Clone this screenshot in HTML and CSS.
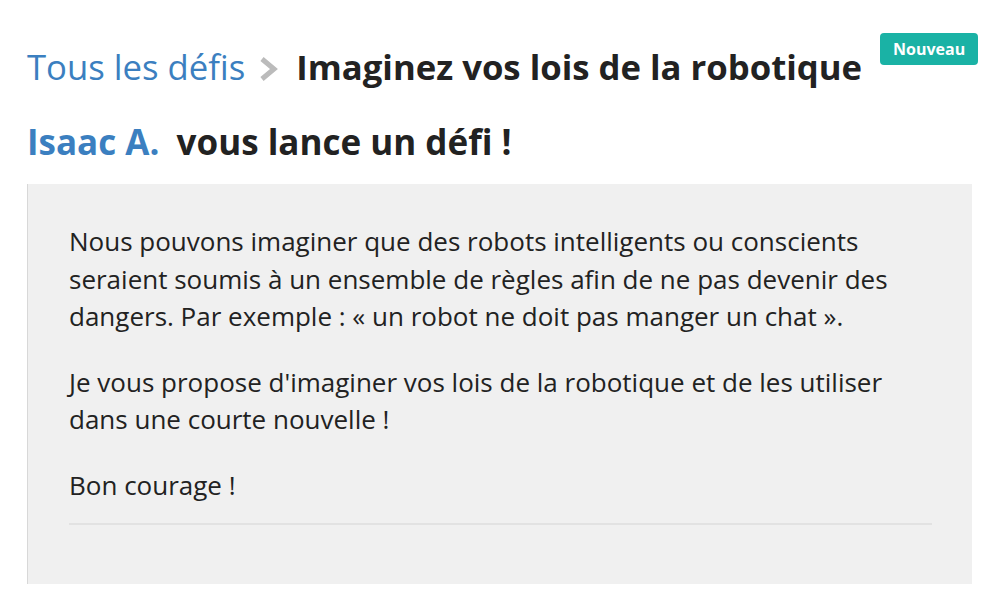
FILE: index.html
```html
<!DOCTYPE html>
<html>
	<head>
		<meta charset="utf-8">
		<title>Imaginez vos lois de la robotique</title>
		<meta name="viewport" content="width=device-width, initial-scale=1">
		<link rel="stylesheet" href="styles.css">
	</head>
	<body>
		<main class="page">
			<!-- Fil d'ariane + titre du défi -->
			<div class="title-row">
				<h1 class="title">
					<a class="crumb" href="#">Tous les défis</a>
					<svg class="sep" width="22" height="26" viewBox="0 0 22 26">
						<path d="M4 3 L16 13 L4 23" fill="none" stroke="#bbb" stroke-width="5"/>
					</svg>
					<span class="name">Imaginez vos lois de la robotique</span>
				</h1>
				<span class="badge">Nouveau</span>
			</div>
			<h2 class="author"><a href="#">Isaac A.</a> vous lance un défi !</h2>
			<section class="challenge">
				<p>Nous pouvons imaginer que des robots intelligents ou conscients seraient soumis à un ensemble de règles afin de ne pas devenir des dangers. Par exemple : « un robot ne doit pas manger un chat ».</p>
				<p>Je vous propose d'imaginer vos lois de la robotique et de les utiliser dans une courte nouvelle !</p>
				<p>Bon courage !</p>
				<hr>
			</section>
		</main>
	</body>
</html>
```

FILE: styles.css
```css
body {
	margin: 0;
	background-color: white;
	font-family: "Open Sans", "Liberation Sans", sans-serif;
	color: #222;
}
.page {
	padding: 0 28px 0 27px;
}
a {
	color: #3b7fc0;
	text-decoration: none;
}
.title-row {
	display: flex;
	align-items: flex-start;
	padding-top: 33px;
}
.title {
	margin: 12px 0 0 0;
	font-size: 34.7px;
	line-height: 44px;
	font-weight: 700;
	white-space: nowrap;
}
.crumb {
	font-weight: 400;
}
.sep {
	margin: 0 7px 0 4px;
	vertical-align: -2px;
}
.badge {
	margin-left: 18px;
	padding: 5px 13px;
	background-color: #1ab2a5;
	color: white;
	font-size: 16px;
	font-weight: 700;
	line-height: 22px;
	border-radius: 4px;
}
.author {
	margin: 31px 0 0 0;
	font-size: 35px;
	line-height: 44px;
	font-weight: 700;
}
.author a {
	margin-right: 8px;
}
.challenge {
	margin-top: 20px;
	height: 400px;
	box-sizing: border-box;
	padding: 39px 40px 0 41px;
	background-color: #f0f0f0;
	border-left: 1px solid #d8d8d8;
}
.challenge p {
	margin: 0 0 28px 0;
	font-size: 26px;
	line-height: 37.5px;
	color: #222;
}
.challenge hr {
	margin: -9px 0 0 0;
	border: none;
	border-top: 2px solid #e2e2e2;
}
```
